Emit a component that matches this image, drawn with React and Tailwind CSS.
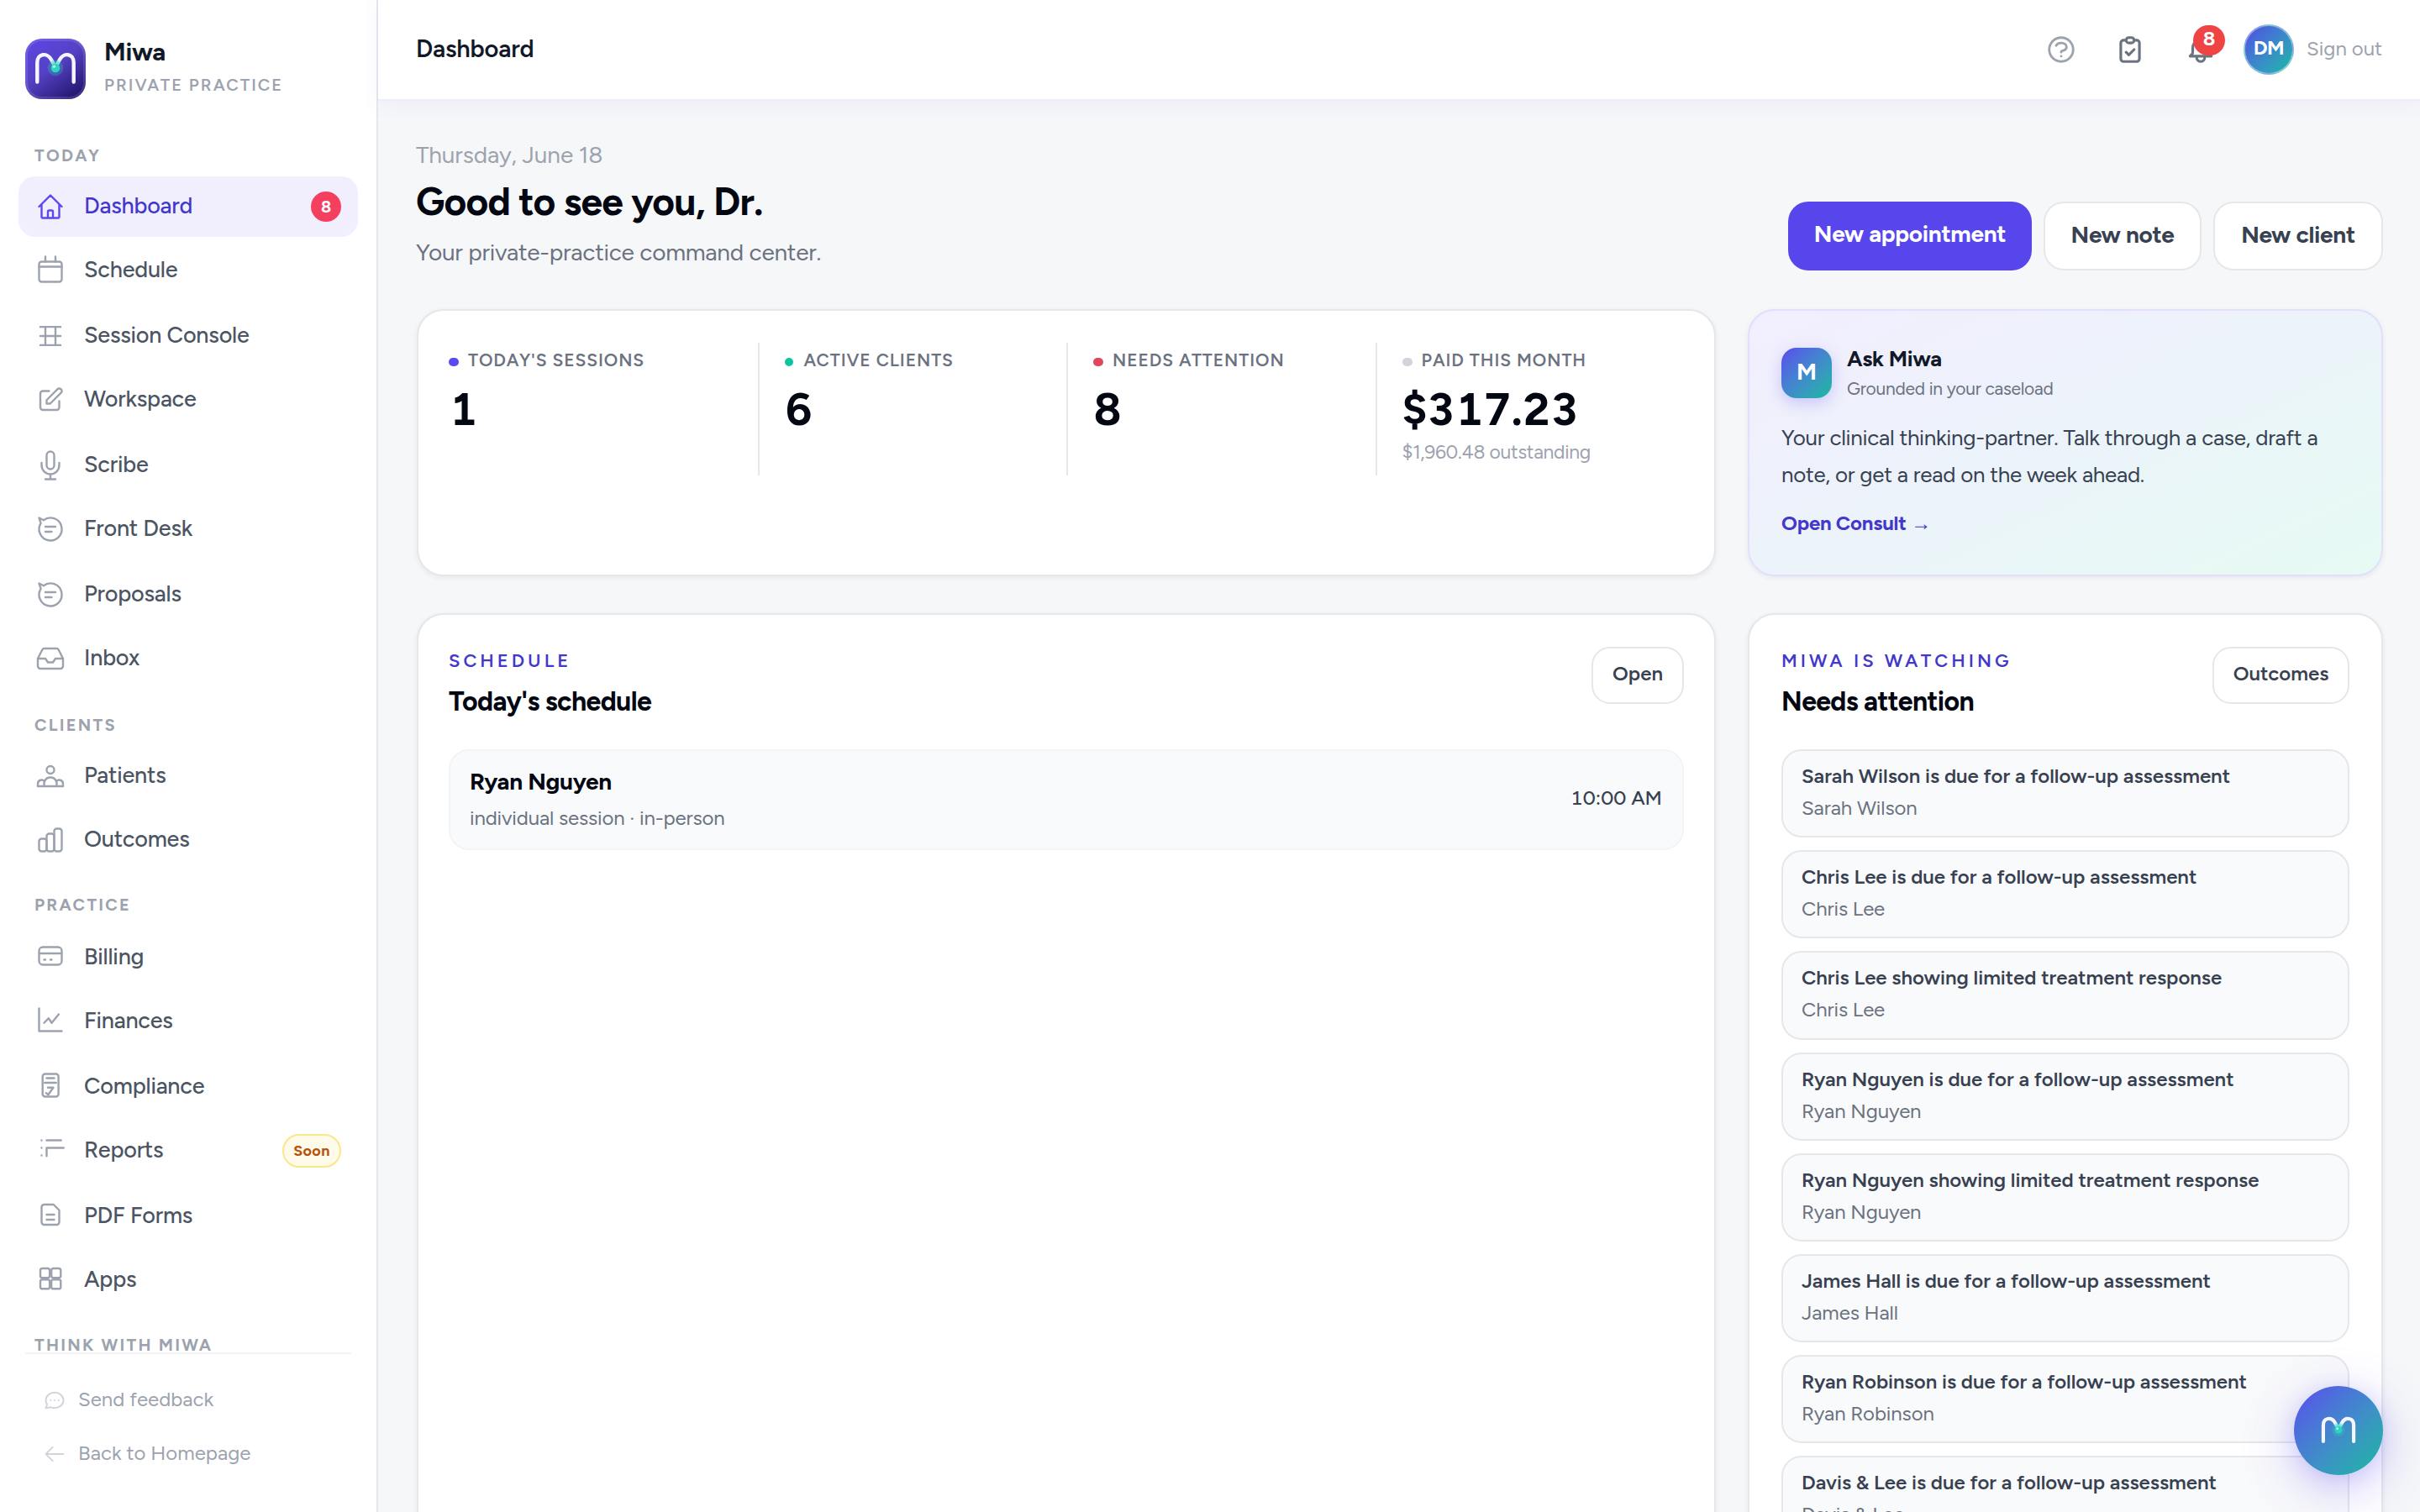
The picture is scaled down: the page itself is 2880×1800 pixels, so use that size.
const GROUPS = [
  {
    title: "Today",
    pad: "pt-[33px]",
    text: "pb-[3px]",
    items: [
      { name: "Dashboard", icon: "home", active: true },
      { name: "Schedule", icon: "calendar" },
      { name: "Session Console", icon: "grid" },
      { name: "Workspace", icon: "edit" },
      { name: "Scribe", icon: "mic" },
      { name: "Front Desk", icon: "chat" },
      { name: "Proposals", icon: "chat" },
      { name: "Inbox", icon: "inbox" },
    ],
  },
  {
    title: "Clients",
    pad: "pt-[23px]",
    text: "pb-[3px]",
    items: [
      { name: "Patients", icon: "users" },
      { name: "Outcomes", icon: "bars" },
    ],
  },
  {
    title: "Practice",
    pad: "pt-[21px]",
    text: "pt-0.5",
    items: [
      { name: "Billing", icon: "card" },
      { name: "Finances", icon: "trend" },
      { name: "Compliance", icon: "checklist" },
      { name: "Reports", icon: "list" },
      { name: "PDF Forms", icon: "doc" },
      { name: "Apps", icon: "apps" },
    ],
  },
  { title: "Think with Miwa", pad: "pt-[23px]", text: "", items: [] },
];

const STATS = [
  { label: "Today's sessions", value: "1", dot: "w-3 bg-[#5b48f0]" },
  { label: "Active clients", value: "6", dot: "mr-0.5 w-2.5 bg-[#0ac5a0]" },
  { label: "Needs attention", value: "8", dot: "w-3 bg-[#e0475f]" },
  { label: "Paid this month", value: "$317.23", dot: "w-3 bg-[#d1d5db]", note: "$1,960.48 outstanding" },
];

const ALERTS = [
  ["Sarah Wilson is due for a follow-up assessment", "Sarah Wilson"],
  ["Chris Lee is due for a follow-up assessment", "Chris Lee"],
  ["Chris Lee showing limited treatment response", "Chris Lee"],
  ["Ryan Nguyen is due for a follow-up assessment", "Ryan Nguyen"],
  ["Ryan Nguyen showing limited treatment response", "Ryan Nguyen"],
  ["James Hall is due for a follow-up assessment", "James Hall"],
  ["Ryan Robinson is due for a follow-up assessment", "Ryan Robinson"],
  ["Davis & Lee is due for a follow-up assessment", "Davis & Lee"],
];

const ICONS = {
  home: <path d="M3 12l2-2m0 0l7-7 7 7M5 10v10a1 1 0 001 1h3m10-11l2 2m-2-2v10a1 1 0 01-1 1h-3m-6 0a1 1 0 001-1v-4a1 1 0 011-1h2a1 1 0 011 1v4a1 1 0 001 1m-6 0h6" />,
  calendar: (
    <>
      <rect x="3" y="5" width="18" height="16" rx="2" />
      <path d="M8 1v4M16 1v4M3 9h18" />
    </>
  ),
  grid: <path d="M4 4.75h16M4 12h16M4 19.25h16M8 4.75v14.5M16 4.75v14.5" />,
  edit: <path d="M11 5H6a2 2 0 00-2 2v11a2 2 0 002 2h11a2 2 0 002-2v-5m-1.414-9.414a2 2 0 112.828 2.828L11.828 15H9v-2.828l8.586-8.586z" />,
  mic: (
    <>
      <rect x="9" y="1" width="6" height="14" rx="3" />
      <path d="M5 10v2a7 7 0 0014 0v-2M12 19v4M8 23h8" />
    </>
  ),
  chat: <path d="M8 10h8M8 14h5M6.6 4.8A9 9 0 114.4 7.2M6.6 4.8L3 3l1.4 4.2" />,
  inbox: (
    <>
      <path d="M22 12h-6l-2 3h-4l-2-3H2" />
      <path d="M5.45 5.11L2 12v6a2 2 0 002 2h16a2 2 0 002-2v-6l-3.45-6.89A2 2 0 0016.76 4H7.24a2 2 0 00-1.79 1.11z" />
    </>
  ),
  users: <path d="M17 20h5v-2a3 3 0 00-5.356-1.857M17 20H7m10 0v-2c0-.656-.126-1.283-.356-1.857M7 20H2v-2a3 3 0 015.356-1.857M7 20v-2c0-.656.126-1.283.356-1.857m0 0a5.002 5.002 0 019.288 0M15 7a3 3 0 11-6 0 3 3 0 016 0z" />,
  bars: (
    <>
      <rect x="3" y="11" width="6" height="10" rx="2" />
      <rect x="9" y="7" width="6" height="14" rx="2" />
      <rect x="15" y="3" width="6" height="18" rx="2" />
    </>
  ),
  card: <path d="M3 10h18M7 15h1m4 0h1m-7 4h12a3 3 0 003-3V8a3 3 0 00-3-3H6a3 3 0 00-3 3v8a3 3 0 003 3z" />,
  trend: <path d="M3 3v18h18M7 14.5l3.5-3.7L13 14.5l5.6-6.8" />,
  checklist: (
    <>
      <rect x="5.8" y="3" width="12.6" height="18" rx="2" />
      <path d="M9 6.3h6M7.5 10h9M10 13.8h4.3l-4 5.7-1.8-1.4" />
    </>
  ),
  list: <path d="M9 5h11.5M9 11h13.5M9 11v6.5M5 5h.01M5 11h.01M5 17h.01" />,
  doc: <path d="M9 12h6m-6 4h6M17 20H7a2 2 0 01-2-2V6a2 2 0 012-2h7.5L19 8.5V18a2 2 0 01-2 2z" />,
  apps: (
    <>
      <rect x="4" y="4" width="7.4" height="7.4" rx="1.6" />
      <rect x="12.8" y="4" width="7.4" height="7.4" rx="1.6" />
      <rect x="4" y="12.8" width="7.4" height="7.4" rx="1.6" />
      <rect x="12.8" y="12.8" width="7.4" height="7.4" rx="1.6" />
    </>
  ),
  help: (
    <>
      <circle cx="12" cy="12" r="9" />
      <path d="M8.228 9c.549-1.165 2.03-2 3.772-2 2.21 0 4 1.343 4 3 0 1.4-1.278 2.575-3.006 2.907-.542.104-.994.54-.994 1.093m0 3h.01" />
    </>
  ),
  clipboard: <path d="M9 5H7a2 2 0 00-2 2v12a2 2 0 002 2h10a2 2 0 002-2V7a2 2 0 00-2-2h-2M9 5a2 2 0 002 2h2a2 2 0 002-2M9 5a2 2 0 012-2h2a2 2 0 012 2m-6 9l2 2 4-4" />,
  bell: <path d="M15 17h5l-1.405-1.405A2.032 2.032 0 0118 14.158V11a6.002 6.002 0 00-4-5.659V5a2 2 0 10-4 0v.341C7.67 6.165 6 8.388 6 11v3.159c0 .538-.214 1.055-.595 1.436L4 17h5m6 0v1a3 3 0 11-6 0v-1m6 0H9" />,
  feedback: <path d="M8 12h.01M12 12h.01M16 12h.01M21 12c0 4.418-4.03 8-9 8a9.863 9.863 0 01-4.255-.949L3 20l1.395-3.72C3.512 15.042 3 13.574 3 12c0-4.418 4.03-8 9-8s9 3.582 9 8z" />,
  back: <path d="M10 19l-7-7m0 0l7-7m-7 7h18" />,
};

function Icon({ name, className, stroke = 1.6 }) {
  return (
    <svg viewBox="0 0 24 24" fill="none" stroke="currentColor" strokeWidth={stroke} strokeLinecap="round" strokeLinejoin="round" className={`shrink-0 overflow-visible ${className}`}>
      {ICONS[name]}
    </svg>
  );
}

function MiwaMark({ id, className, stroke = 4.4 }) {
  return (
    <svg viewBox="0 0 72 72" fill="none" className={className}>
      <defs>
        <radialGradient id={id} gradientUnits="userSpaceOnUse" cx="36" cy="35" r="12">
          <stop offset="0.3" stopColor="#5eead4" />
          <stop offset="1" stopColor="#f7f5ff" />
        </radialGradient>
      </defs>
      <path d="M14.3 51.5V28.5C14.3 17 26.5 16.5 31 25L36 34L41 25C45.5 16.5 57.7 17 57.7 28.5V51.5" stroke={`url(#${id})`} strokeWidth={stroke} strokeLinecap="round" strokeLinejoin="round" />
      <circle cx="36" cy="35" r="9.3" fill="#2dd4bf" opacity="0.28" />
      <circle cx="36" cy="35" r="5.3" fill="#2dd4bf" />
      <circle cx="34.4" cy="33.2" r="1.7" fill="#b5f5ea" />
    </svg>
  );
}

function NavItem({ item, text }) {
  return (
    <a className={`flex h-[72px] items-center rounded-[20px] pl-5 pr-5 odd:mb-1 even:mb-1.5 ${item.active ? "bg-[#f1eefe] text-[#4338ca]" : "text-[#4b5563]"}`}>
      <Icon name={item.icon} className={`mr-[22px] size-9 ${item.active ? "text-[#5b48f0]" : "text-[#9ca3af]"}`} />
      <span className={`flex-1 text-[27px] font-medium leading-[36px] tracking-[-0.008em] ${text}`}>{item.name}</span>
      {item.active && (
        <span className="flex size-9 items-center justify-center rounded-full bg-[#f43f5e] text-[20px] font-bold leading-none text-white">8</span>
      )}
      {item.name === "Reports" && (
        <span className="mt-1 flex h-10 w-[70px] items-center justify-center rounded-full border-2 border-[#fde68a] bg-[#fffbeb] text-[18px] font-bold leading-none tracking-[0.02em] text-[#b45309]">Soon</span>
      )}
    </a>
  );
}

function Sidebar() {
  return (
    <aside className="flex w-[450px] shrink-0 flex-col border-r-2 border-[#e5e7eb] bg-white">
      <div className="flex h-[138px] shrink-0 items-start pl-[30px] pt-[46px]">
        <div className="size-[72px] rounded-[20px] bg-[linear-gradient(145deg,#5f46e8_0%,#5442c4_45%,#1f1268_95%)] shadow-[inset_0_0_0_3px_rgba(255,255,255,0.12)]">
          <MiwaMark id="mark-logo" className="size-[72px]" />
        </div>
        <div className="pl-[22px]">
          <p className="text-[30px] font-bold leading-[31px] tracking-[-0.011em] text-[#111827]">Miwa</p>
          <p className="mt-[10px] text-[20px] font-semibold uppercase leading-[28px] tracking-[0.102em] text-[#9ca3af]">Private Practice</p>
        </div>
      </div>
      <nav className="h-[1472px] overflow-hidden pl-[22px] pr-[22px]">
        {GROUPS.map((g) => (
          <div key={g.title} className={g.pad}>
            <p className="h-[39px] pl-[19px] text-[20px] font-bold uppercase leading-[28px] tracking-[0.113em] text-[#9ca3af]">{g.title}</p>
            <div>
              {g.items.map((item) => (
                <NavItem key={item.name} item={item} text={g.text} />
              ))}
            </div>
          </div>
        ))}
      </nav>
      <div className="ml-[30px] mr-[30px] border-t-2 border-[#f3f4f6] pl-[21px] pt-[23px] text-[24px] leading-[36px] text-[#9ca3af]">
        <a className="flex h-16 items-center">
          <Icon name="feedback" className="mr-[14px] size-7 text-[#d1d5db]" stroke={1.7} />
          <span className="pb-[3px]">Send feedback</span>
        </a>
        <a className="flex h-16 items-center">
          <Icon name="back" className="mr-[14px] size-7 text-[#d1d5db]" stroke={1.7} />
          <span className="pb-[3px]">Back to Homepage</span>
        </a>
      </div>
    </aside>
  );
}

function Header() {
  return (
    <header className="relative z-10 flex h-[120px] shrink-0 items-center justify-between border-b-2 border-[#eeecfd] bg-white pl-[45px] pr-11 shadow-[0_4px_24px_rgba(88,70,237,0.06)]">
      <h1 className="pb-[3px] text-[29px] font-semibold leading-[40px] tracking-[-0.006em] text-[#111827]">Dashboard</h1>
      <div className="flex items-center">
        <Icon name="help" className="mr-11 size-[38px] text-[#9ca3af]" stroke={1.8} />
        <Icon name="clipboard" className="mr-[46px] size-[38px] text-[#6b7280]" stroke={2} />
        <div className="relative mr-8">
          <Icon name="bell" className="size-[38px] text-[#6b7280]" stroke={2} />
          <span className="absolute -top-2.5 left-[10px] flex h-9 w-[38px] items-center justify-center rounded-full bg-[#ef4444] pb-[5px] text-[24px] font-bold leading-none text-white">8</span>
        </div>
        <div className="flex size-[60px] items-center justify-center rounded-full border-2 border-white/40 bg-linear-135 from-[#4f46e5] to-[#14b8a6] pb-1 text-[24px] font-bold tracking-[-0.02em] text-white">DM</div>
        <span className="w-[106px] whitespace-nowrap pb-0.5 pl-[15px] text-[24px] text-[#9ca3af]">Sign out</span>
      </div>
    </header>
  );
}

function Greeting() {
  return (
    <section className="-ml-px flex h-[248px] items-start justify-between pt-[46px]">
      <div>
        <p className="text-[28px] leading-[36px] tracking-[-0.004em] text-[#9ca3af]">Thursday, June 18</p>
        <h2 className="mt-1 text-[46px] font-bold leading-[68px] tracking-[-0.016em] text-[#030712]">Good to see you, Dr.</h2>
        <p className="mt-1.5 text-[28px] leading-[40px] tracking-[-0.009em] text-[#6b7280]">Your private-practice command center.</p>
      </div>
      <div className="flex gap-3.5 pt-[74px] text-[28px] font-bold leading-[74px] tracking-[-0.011em] text-[#374151]">
        <button className="h-[82px] w-[290px] rounded-3xl bg-[#5846ed] pb-1.5 text-white">New appointment</button>
        <button className="h-[82px] w-[188px] rounded-3xl border-2 border-[#e5e7eb] bg-white pb-1.5">New note</button>
        <button className="h-[82px] w-[202px] rounded-3xl border-2 border-[#e5e7eb] bg-white pb-1.5">New client</button>
      </div>
    </section>
  );
}

function Stats() {
  return (
    <section className="rounded-[32px] border-2 border-[#e5e7eb] bg-white px-9 pt-[38px] shadow-[0_2px_6px_rgba(17,24,39,0.07)]">
      <div className="grid grid-cols-4">
        {STATS.map((s) => (
          <div key={s.label} className="h-[158px] border-l-2 border-[#e5e7eb] pl-[30px] pt-[7px] first:border-l-0 first:pl-0">
            <div className="flex items-center gap-[11px]">
              <span className={`mt-1 h-2.5 rounded-full ${s.dot}`} />
              <span className="text-[21px] font-semibold uppercase leading-[28px] tracking-[0.044em] text-[#6b7280]">{s.label}</span>
            </div>
            <p className="mt-[11px] text-[54px] font-bold leading-[68px] tabular-nums tracking-[-0.011em] text-[#030712]">{s.value}</p>
            {s.note && <p className="text-[23px] leading-[32px] tracking-[-0.014em] text-[#9ca3af]">{s.note}</p>}
          </div>
        ))}
      </div>
    </section>
  );
}

function AskMiwa() {
  return (
    <section className="rounded-[32px] border-2 border-[#e2defb] bg-[linear-gradient(155deg,#f2eefe_0%,#edf2fb_40%,#e8f8f6_80%,#e6faf3_100%)] px-[38px] pt-11 shadow-[0_2px_6px_rgba(17,24,39,0.07)]">
      <div className="flex h-16">
        <div className="flex size-[60px] items-center justify-center rounded-[18px] bg-linear-135 from-[#5846ed] to-[#10b9a0] pb-1 text-[28px] font-bold text-white shadow-[0_6px_18px_rgba(88,70,237,0.25)]">M</div>
        <div className="pl-[18px]">
          <p className="text-[26px] font-bold leading-[26px] tracking-[-0.011em] text-[#111827]">Ask Miwa</p>
          <p className="mt-2 text-[21px] leading-[30px] tracking-[-0.012em] text-[#6b7280]">Grounded in your caseload</p>
        </div>
      </div>
      <p className="mt-[21px] text-[26px] leading-[44px] tracking-[-0.012em] text-[#374151]">
        Your clinical thinking-partner. Talk through a case, draft a
        <br />
        note, or get a read on the week ahead.
      </p>
      <a className="mt-4 block text-[24px] font-bold leading-[40px] tracking-[-0.009em] text-[#4338ca]">
        Open Consult <span className="font-['Liberation_Sans'] text-[24px] font-normal">→</span>
      </a>
    </section>
  );
}

function PanelHead({ eyebrow, title, action, width }) {
  return (
    <div className="flex h-[122px] items-start justify-between">
      <div>
        <p className="pt-px text-[22px] font-semibold uppercase leading-[32px] tracking-[0.182em] text-[#4338ca]">{eyebrow}</p>
        <h3 className="mt-[10px] text-[32px] font-bold leading-[44px] tracking-[-0.019em] text-[#030712]">{title}</h3>
      </div>
      <button className={`h-[68px] rounded-[22px] border-2 border-[#e5e7eb] bg-white pb-1 text-[24px] font-semibold text-[#374151] ${width}`}>{action}</button>
    </div>
  );
}

function Schedule() {
  return (
    <section className="rounded-[32px] border-2 border-[#e5e7eb] bg-white px-9 pt-[38px] shadow-[0_2px_6px_rgba(17,24,39,0.07)]">
      <PanelHead eyebrow="Schedule" title="Today's schedule" action="Open" width="w-[110px]" />
      <div className="flex h-[120px] items-center justify-between rounded-3xl border-2 border-[#f3f4f6] bg-[#f9fafb] pl-[23px] pr-6">
        <div>
          <p className="text-[28px] font-bold leading-[36px] tracking-[-0.011em] text-[#030712]">Ryan Nguyen</p>
          <p className="mt-2 text-[24px] leading-[36px] tracking-[-0.006em] text-[#6b7280]">individual session · in-person</p>
        </div>
        <span className="pb-1 text-[24px] font-medium tabular-nums text-[#374151]">10:00 AM</span>
      </div>
    </section>
  );
}

function NeedsAttention() {
  return (
    <section className="rounded-[32px] border-2 border-[#e5e7eb] bg-white px-[38px] pt-[38px] shadow-[0_2px_6px_rgba(17,24,39,0.07)]">
      <PanelHead eyebrow="Miwa is watching" title="Needs attention" action="Outcomes" width="w-[163px]" />
      <div className="flex flex-col gap-[15px]">
        {ALERTS.map(([title, who], i) => (
          <div key={i} className="h-[105.2px] rounded-3xl border-2 border-[#e5e7eb] bg-[#f9fafb] px-[22px] pt-3">
            <p className="text-[24px] font-semibold leading-[36px] tracking-[-0.001em] text-[#374151]">{title}</p>
            <p className="mt-0.5 text-[24px] leading-[36px] tracking-[-0.005em] text-[#6b7280]">{who}</p>
          </div>
        ))}
      </div>
    </section>
  );
}

export default function App() {
  return (
    <div className="relative flex h-[1800px] w-[2880px] overflow-hidden bg-[#f6f7f9] font-['Figtree','Lato',sans-serif]">
      <Sidebar />
      <div className="flex min-w-0 flex-1 flex-col">
        <Header />
        <main className="flex-1 overflow-hidden pl-[46px] pr-11">
          <Greeting />
          <div className="grid grid-cols-[1546px_756px] grid-rows-[318px_1200px] gap-x-[38px] gap-y-11">
            <Stats />
            <AskMiwa />
            <Schedule />
            <NeedsAttention />
          </div>
        </main>
      </div>
      <button className="absolute bottom-11 right-11 z-20 flex size-[106px] items-center justify-center rounded-full bg-linear-135 from-[#5846ed] to-[#10b9a0] shadow-[0_16px_64px_rgba(88,70,237,0.3),0_4px_24px_rgba(88,70,237,0.15)]">
        <MiwaMark id="mark-fab" className="size-[60px]" stroke={5} />
      </button>
    </div>
  );
}
